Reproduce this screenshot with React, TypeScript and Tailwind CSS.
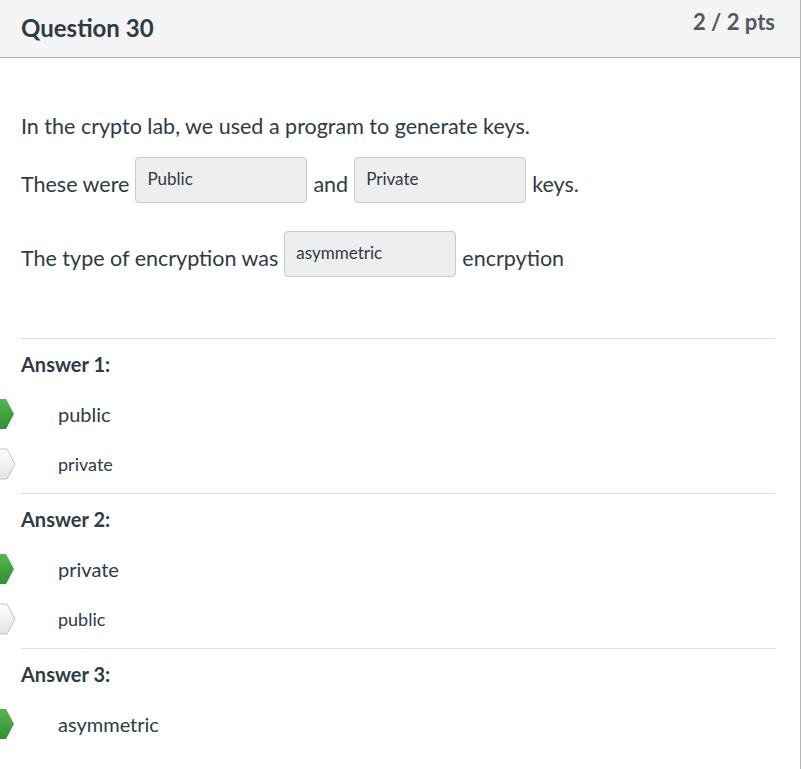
const font = { fontFamily: "Lato, 'Open Sans', sans-serif" };

function Marker({ correct }: { correct: boolean }) {
  if (correct) {
    return (
      <svg width="16" height="34" viewBox="0 0 16 34" className="shrink-0">
        <defs>
          <linearGradient id="gm" x1="0" y1="0" x2="0" y2="1">
            <stop offset="0" stopColor="#55b652" />
            <stop offset="1" stopColor="#2f8f32" />
          </linearGradient>
        </defs>
        <polygon points="0,2 6,2 14,17 6,32 0,32" fill="url(#gm)" />
      </svg>
    );
  }
  return (
    <svg width="16" height="34" viewBox="0 0 16 34" className="shrink-0">
      <defs>
        <linearGradient id="wm" x1="0" y1="0" x2="0" y2="1">
          <stop offset="0" stopColor="#ffffff" />
          <stop offset="1" stopColor="#e2e2e2" />
        </linearGradient>
      </defs>
      <polygon points="-1,2 7,2 15,17 7,32 -1,32" fill="url(#wm)" stroke="#c4c4c4" strokeWidth="1" />
    </svg>
  );
}

function Blank({ value }: { value: string }) {
  return (
    <span className="w-[172px] h-[46px] mx-[6px] px-[11px] pb-[3px] flex items-center bg-[#eeeeee] border border-[#c9c9c9] rounded-[4px] text-[17px] text-[#2d3b45]">
      {value}
    </span>
  );
}

interface Answer {
  label: string;
  options: { text: string; picked: boolean }[];
}

const answers: Answer[] = [
  { label: "Answer 1:", options: [{ text: "public", picked: true }, { text: "private", picked: false }] },
  { label: "Answer 2:", options: [{ text: "private", picked: true }, { text: "public", picked: false }] },
  { label: "Answer 3:", options: [{ text: "asymmetric", picked: true }] },
];

export default function App() {
  return (
    <div style={font} className="w-[801px] h-[769px] bg-white text-[#2d3b45] overflow-hidden">
      <div className="w-[801px] h-full border-r border-[#b5b5b5]">
        {/* header */}
        <div className="h-[58px] bg-[#f4f4f4] border-b border-[#b5b5b5] pl-[21px] pr-[25px] flex justify-between">
          <h2 className="pt-[10px] text-[24px] leading-[36px] font-bold text-[#2d3b45]">Question 30</h2>
          <div className="pt-[5px] text-[22px] leading-[33px] font-bold text-[#505a60]">2 / 2 pts</div>
        </div>

        {/* question text */}
        <div className="pl-[21px] pr-[25px] pt-[53px] text-[21.5px]">
          <p className="h-[30px] leading-[30px]">In the crypto lab, we used a program to generate keys.</p>
          <div className="mt-[16px] flex items-center h-[46px]">
            <span className="pt-[8px]">These were</span>
            <Blank value="Public" />
            <span className="pt-[8px]">and</span>
            <Blank value="Private" />
            <span className="pt-[8px]">keys.</span>
          </div>
          <div className="mt-[28px] flex items-center h-[46px]">
            <span className="pt-[8px]">The type of encryption was</span>
            <Blank value="asymmetric" />
            <span className="pt-[8px]">encrpytion</span>
          </div>
        </div>

        {/* answers */}
        <div className="mt-[61px]">
          {answers.map((a) => (
            <div key={a.label}>
              <div className="ml-[21px] mr-[25px] border-t border-[#dddddd]" />
              <div className="h-[50px] pl-[21px] flex items-center text-[20px] font-bold">{a.label}</div>
              {a.options.map((o, i) => (
                <div key={i} className="h-[50px] flex items-center">
                  <Marker correct={o.picked} />
                  <span className={`ml-[42px] ${o.picked ? "text-[20px]" : "text-[18px]"}`}>{o.text}</span>
                </div>
              ))}
              <div className="h-[4px]" />
            </div>
          ))}
        </div>
      </div>
    </div>
  );
}
